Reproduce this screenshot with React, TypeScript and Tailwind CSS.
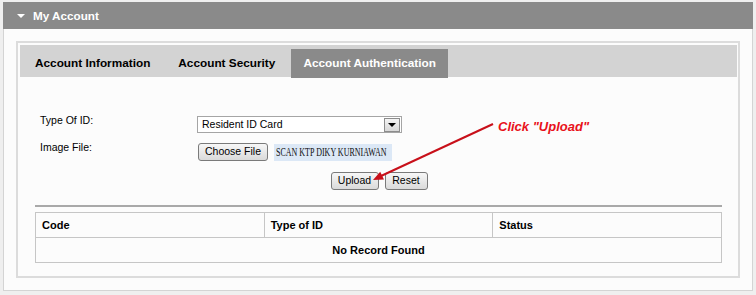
export default function App() {
  const tabs = ["Account Information", "Account Security", "Account Authentication"];
  const active = 2;

  return (
    <div className="relative w-[756px] h-[295px] bg-[#efefef] pt-[2px] pl-[3px] font-['Liberation_Sans',Arial,sans-serif] text-black">
      <div className="w-[750px]">
        {/* panel header */}
        <div className="h-[27px] bg-[#8a8a8a] flex items-center pl-[14px]">
          <div className="w-0 h-0 border-l-[4px] border-r-[4px] border-t-[4px] border-l-transparent border-r-transparent border-t-white mr-[8px]" />
          <span className="text-white text-[11.7px] font-bold">My Account</span>
        </div>

        {/* panel body */}
        <div className="bg-[#fcfcfc] border-x border-b border-[#d4d4d4] p-[12px]">
          <div className="h-[237px] border-2 border-[#dcdcdc] bg-[#fcfcfc]">
            {/* tabs */}
            <div className="ml-[2px] mr-[1px] mt-[2px] h-[32px] bg-[#d3d3d3] flex items-end pl-[3px] gap-[4px]">
              {tabs.map((t, i) => (
                <div
                  key={t}
                  className={
                    i === active
                      ? "h-[29px] -mb-[1px] px-[12px] flex items-center bg-[#8a8a8a] text-white text-[11.8px] font-bold"
                      : "h-[29px] -mb-[1px] px-[12px] flex items-center text-[11.8px] font-bold text-black"
                  }
                >
                  {t}
                </div>
              ))}
            </div>

            {/* form */}
            <div className="mt-[39px] pl-[22px] text-[10.5px]">
              <div className="flex items-start h-[17px]">
                <div className="w-[157px] -mt-[4px] leading-[17px]">Type Of ID:</div>
                <div className="w-[205px] h-[17px] border border-[#a5a5a5] bg-white flex items-center justify-between pl-[4px] pr-[1px]">
                  <span>Resident ID Card</span>
                  <div className="w-[16px] h-[14px] border border-[#8c8c8c] bg-linear-to-b from-[#f4f4f4] to-[#d8d8d8] flex items-center justify-center">
                    <div className="w-0 h-0 border-l-[4px] border-r-[4px] border-t-[4px] border-l-transparent border-r-transparent border-t-black" />
                  </div>
                </div>
              </div>

              <div className="flex items-start mt-[10px] h-[18px]">
                <div className="w-[158px] -mt-[4px] leading-[17px]">Image File:</div>
                <div className="w-[70px] h-[18px] border border-[#7a7a7a] rounded-[3px] bg-linear-to-b from-[#f7f7f7] to-[#dadada] flex items-center justify-center">
                  Choose File
                </div>
                <div className="ml-[6px] mt-[1px] w-[118px] h-[17px] bg-[#dce8f6] overflow-hidden flex items-center pl-[2px]">
                  <span className="inline-block whitespace-nowrap origin-left scale-x-[0.64] text-[12.5px] font-['Liberation_Serif','Times_New_Roman',serif] text-[#111]">
                    SCAN KTP DIKY KURNIAWAN
                  </span>
                </div>
              </div>
            </div>

            <div className="mt-[11px] flex justify-center gap-[6px] text-[10.5px] pl-[2px]">
              <div className="w-[48px] h-[18px] border border-[#7a7a7a] rounded-[3px] bg-linear-to-b from-[#f7f7f7] to-[#dadada] flex items-center justify-center">
                Upload
              </div>
              <div className="w-[43px] h-[18px] border border-[#7a7a7a] rounded-[3px] bg-linear-to-b from-[#f7f7f7] to-[#dadada] flex items-center justify-center">
                Reset
              </div>
            </div>

            {/* divider + table */}
            <div className="ml-[17px] mr-[16px]">
              <div className="mt-[15px] h-[2px] bg-[#a9a9a9]" />
              <table className="mt-[5px] w-full border-collapse text-[11px] font-bold">
                <thead>
                  <tr className="h-[25px]">
                    <th className="w-1/3 border border-[#c6c6c6] text-left pl-[6px] font-bold">Code</th>
                    <th className="w-1/3 border border-[#c6c6c6] text-left pl-[6px] font-bold">Type of ID</th>
                    <th className="w-1/3 border border-[#c6c6c6] text-left pl-[6px] font-bold">Status</th>
                  </tr>
                </thead>
                <tbody>
                  <tr className="h-[25px]">
                    <td colSpan={3} className="border border-[#c6c6c6] text-center">
                      No Record Found
                    </td>
                  </tr>
                </tbody>
              </table>
            </div>
          </div>
        </div>
      </div>

      {/* annotation */}
      <div className="absolute left-[498px] top-[119px] text-[13px] leading-[15px] font-bold italic text-[#e8111a]">
        Click "Upload"
      </div>
      <svg className="absolute left-0 top-0 pointer-events-none" width="756" height="295">
        <line x1="493" y1="124" x2="381" y2="176" stroke="#c8101a" strokeWidth="2" />
        <polygon points="373,180 384,179.6 380.2,171.8" fill="#c8101a" />
      </svg>
    </div>
  );
}
